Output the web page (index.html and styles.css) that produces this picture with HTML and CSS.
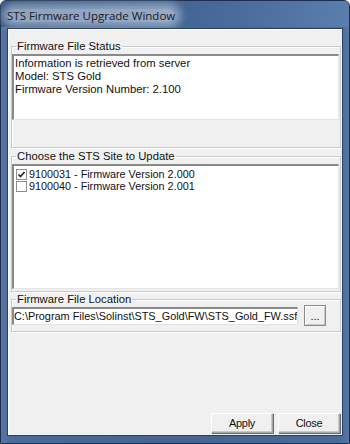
FILE: index.html
```html
<!DOCTYPE html>
<html>
<head>
<meta charset="utf-8">
<link rel="stylesheet" href="styles.css">
</head>
<body>
<div class="window">
  <div class="titlebar"><span class="title">STS Firmware Upgrade Window</span></div>
  <div class="client">
    <fieldset class="group status">
      <legend>Firmware File Status</legend>
      <div class="textbox status-box">
        <div>Information is retrieved from server</div>
        <div>Model: STS Gold</div>
        <div>Firmware Version Number: 2.100</div>
      </div>
    </fieldset>
    <fieldset class="group sites">
      <legend>Choose the STS Site to Update</legend>
      <div class="textbox list-box">
        <div class="item"><span class="check"><svg width="9" height="9" viewBox="0 0 9 9"><path d="M1.5 4.5 L3.5 6.5 L7.5 2" fill="none" stroke="#222" stroke-width="1.6"/></svg></span><span>9100031 - Firmware Version 2.000</span></div>
        <div class="item"><span class="check"></span><span>9100040 - Firmware Version 2.001</span></div>
      </div>
    </fieldset>
    <fieldset class="group location">
      <legend>Firmware File Location</legend>
      <div class="loc-row">
        <div class="textbox path">C:\Program Files\Solinst\STS_Gold\FW\STS_Gold_FW.ssf</div>
        <button class="btn browse">...</button>
      </div>
    </fieldset>
    <div class="spacer"></div>
    <div class="buttons">
      <button class="btn action">Apply</button>
      <button class="btn action">Close</button>
    </div>
  </div>
</div>
</body>
</html>
```
FILE: styles.css
```css
html, body {
  margin: 0;
  padding: 0;
  background: #fff;
}
.window {
  width: 350px;
  height: 444px;
  box-sizing: border-box;
  display: flex;
  flex-direction: column;
  border: 1px solid #1d2f4c;
  border-radius: 6px 6px 0 0;
  background: linear-gradient(90deg, #5675a3 0%, #4a6b9a 3%, #44648f 50%, #4a6b9a 97%, #5675a3 100%);
  font-family: "Liberation Sans", Arial, sans-serif;
}
.titlebar {
  height: 26px;
  display: flex;
  align-items: center;
  padding-left: 6px;
  background: linear-gradient(100deg, #2f507e 0%, #3e6190 40%, #4a6d9d 70%, #5a7eae 100%);
  border-radius: 5px 5px 0 0;
}
.title {
  font-family: "Open Sans", "Liberation Sans", sans-serif;
  font-size: 11.5px;
  color: #1a1a1a;
  background: rgba(220, 228, 240, 0.55);
  box-shadow: 0 0 8px 6px rgba(220, 228, 240, 0.5);
  border-radius: 8px;
  line-height: 13px;
  margin-top: 2px;
}
.client {
  flex: 1;
  margin: 1px 6px 7px 6px;
  background: #f0f0f0;
  border: 1px solid #2a4165;
  box-shadow: inset 1px 1px 0 #fff;
  display: flex;
  flex-direction: column;
  padding: 11px 1px 0 3px;
  font-size: 11px;
  color: #111;
}
.group {
  margin: 0;
  padding: 0 1px 0 0;
  border: 1px solid #c9c9c9;
  box-shadow: 1px 1px 0 #fff, inset 1px 1px 0 #fff;
  min-width: 0;
  box-sizing: border-box;
}
.group legend {
  padding: 0 1px;
  margin-left: 4px;
  font-size: 11.3px;
  line-height: 13px;
  color: #111;
}
.textbox {
  background: #fff;
  border: 1px solid #a0a0a0;
  border-top: 2px solid #8a8a8a;
  border-left: 2px solid #8a8a8a;
  border-right-color: #e4e4e4;
  border-bottom-color: #e4e4e4;
  box-sizing: border-box;
}
.status {
  height: 108px;
}
.status-box {
  height: 66px;
  margin-top: 1px;
  padding: 1px 0 0 1px;
  line-height: 13px;
  font-size: 11.3px;
}
.sites {
  margin-top: 2px;
  height: 142px;
}
.list-box {
  height: 125px;
  margin-top: 1px;
  padding: 2px 0 0 2px;
}
.item {
  display: flex;
  align-items: center;
  height: 12px;
  line-height: 12px;
  font-size: 10.8px;
}
.check {
  width: 9px;
  height: 9px;
  flex: none;
  border: 1px solid #8f8f8f;
  background: #fff;
  margin-right: 2px;
  display: flex;
  align-items: center;
  justify-content: center;
}
.check svg { display: block; }
.location {
  margin-top: 1px;
  height: 39px;
}
.loc-row {
  display: flex;
  align-items: flex-start;
  gap: 6px;
}
.path {
  width: 286px;
  height: 18px;
  margin-top: 1px;
  line-height: 14px;
  padding-left: 0;
  white-space: nowrap;
  overflow: hidden;
  font-size: 10.9px;
}
.btn {
  font-family: "Liberation Sans", Arial, sans-serif;
  background: #f0f0f0;
  border: 1px solid #a8a8a8;
  border-top-color: #fff;
  border-left-color: #fff;
  box-shadow: 1px 1px 0 #6a6a6a, inset -1px -1px 0 #c8c8c8;
  padding: 0;
  color: #111;
}
.browse {
  width: 22px;
  height: 21px;
  margin-top: -1px;
  font-size: 11px;
  line-height: 12px;
  border: 1px solid #8a8a8a;
  box-shadow: inset 1px 1px 0 #fff, inset -1px -1px 0 #c8c8c8;
}
.spacer { flex: 1; }
.buttons {
  display: flex;
  justify-content: flex-end;
  gap: 5px;
  padding: 0 1px 2px 0;
}
.action {
  width: 62px;
  height: 20px;
  font-size: 11px;
  letter-spacing: -0.3px;
}
```
